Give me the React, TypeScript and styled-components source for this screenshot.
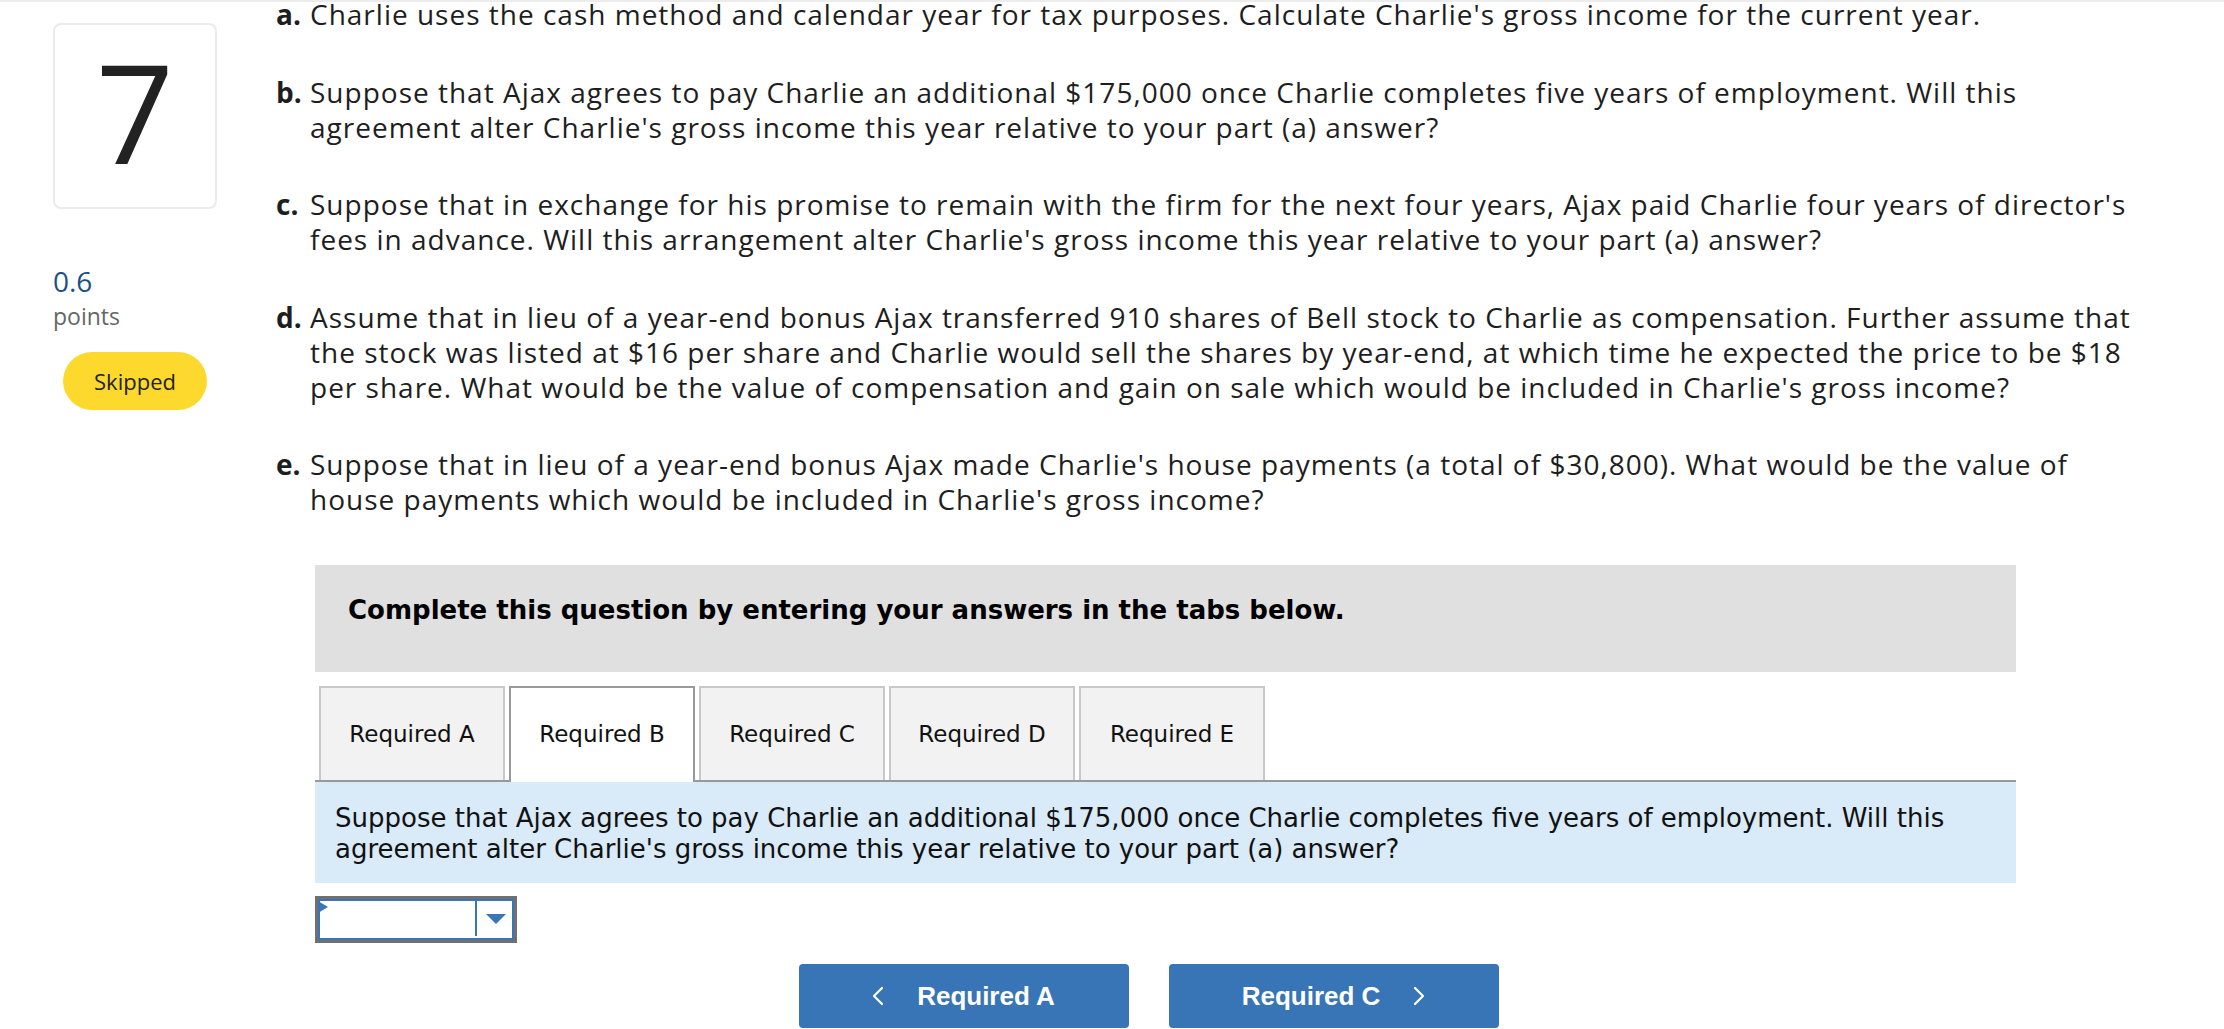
import React from 'react';
import styled, { createGlobalStyle } from 'styled-components';

const GlobalStyle = createGlobalStyle`
  html, body {
    margin: 0;
    padding: 0;
    background: #ffffff;
    overflow: hidden;
  }
  body {
    font-family: "Open Sans", "Liberation Sans", sans-serif;
    color: #1e1e1e;
  }
  * { box-sizing: border-box; }
`;

const TopShade = styled.div`
  position: fixed;
  top: 0;
  left: 0;
  right: 0;
  height: 2px;
  background: #ececec;
  z-index: 10;
`;

const Page = styled.div`
  display: flex;
  align-items: flex-start;
  width: 2224px;
`;

const Sidebar = styled.aside`
  flex: none;
  width: 164px;
  margin-left: 53px;
  padding-top: 23px;
  display: flex;
  flex-direction: column;
`;

const NumberCard = styled.div`
  height: 186px;
  border: 2px solid #ebebeb;
  border-radius: 8px;
  display: flex;
  align-items: center;
  justify-content: center;
  padding-bottom: 10px;
  font-size: 137px;
  font-weight: 500;
  line-height: 1;
  color: #222222;
`;

const Score = styled.div`
  margin-top: 56px;
  font-size: 28px;
  line-height: 33px;
  color: #1b4f8a;
`;

const ScoreUnit = styled.div`
  margin-top: 3px;
  font-size: 23px;
  line-height: 30px;
  color: #666666;
`;

const StatusPill = styled.div`
  align-self: center;
  margin-top: 21px;
  width: 144px;
  height: 58px;
  border-radius: 29px;
  background: #fdd92e;
  display: flex;
  align-items: center;
  justify-content: center;
  font-size: 22px;
  color: #222222;
`;

const Main = styled.main`
  flex: none;
  margin-left: 59px;
  margin-top: -3px;
  width: 1880px;
`;

const QuestionList = styled.div`
  display: flex;
  flex-direction: column;
  gap: 42.5px;
`;

const Part = styled.div`
  display: grid;
  grid-template-columns: 34px auto;
  font-size: 28px;
  line-height: 35px;
  color: #1e1e1e;
`;

const PartLabel = styled.span`
  font-weight: 700;
`;

const PartText = styled.span`
  letter-spacing: 1px;
`;

const AnswerSection = styled.section`
  margin-top: 48px;
  margin-left: 39px;
  width: 1701px;
  font-family: "DejaVu Sans", Verdana, sans-serif;
`;

const Instructions = styled.div`
  height: 107px;
  background: #e0e0e0;
  padding: 30px 33px 0;
  font-size: 26px;
  line-height: 31px;
  font-weight: 700;
  color: #000000;
`;

const TabBar = styled.div`
  margin-top: 14px;
  display: flex;
  align-items: flex-end;
  gap: 4px;
  padding-left: 4px;
  border-bottom: 2px solid #999999;
`;

const Tab = styled.div<{ $active?: boolean }>`
  position: relative;
  width: 186px;
  height: ${(p) => (p.$active ? '96px' : '94px')};
  margin-bottom: ${(p) => (p.$active ? '-2px' : '0')};
  border: 2px solid ${(p) => (p.$active ? '#999999' : '#c8c8c8')};
  border-bottom: none;
  background: ${(p) => (p.$active ? '#ffffff' : '#f2f2f2')};
  display: flex;
  align-items: center;
  justify-content: center;
  padding-bottom: ${(p) => (p.$active ? '2px' : '0')};
  font-size: 23px;
  color: #111111;
  z-index: ${(p) => (p.$active ? 1 : 0)};
`;

const Prompt = styled.div`
  background: #d9eaf8;
  padding: 21px 20px 18px;
  font-size: 26px;
  line-height: 31px;
  color: #111111;
`;

const Select = styled.div`
  position: relative;
  margin-top: 13px;
  width: 202px;
  height: 47px;
  border: 3px solid #707070;
  display: flex;
`;

const SelectInner = styled.div`
  flex: 1;
  display: flex;
  border: 2px solid #3a74b9;
  background: #ffffff;
`;

const SelectValue = styled.div`
  flex: 1;
`;

const SelectToggle = styled.div`
  width: 37px;
  margin-bottom: 2px;
  border-left: 2px solid #3a74b9;
  display: flex;
  align-items: center;
  justify-content: center;
  padding-left: 2px;
`;

const Flag = styled.span`
  position: absolute;
  left: 0;
  top: 2px;
  width: 0;
  height: 0;
  border-left: 10px solid #3a74b9;
  border-top: 6px solid transparent;
  border-bottom: 6px solid transparent;
`;

const NavRow = styled.div`
  margin-top: 21px;
  padding-right: 34px;
  display: flex;
  justify-content: center;
  gap: 40px;
`;

const NavButton = styled.button`
  width: 330px;
  height: 64px;
  border: none;
  border-radius: 4px;
  background: #3775b6;
  color: #ffffff;
  font-family: "Liberation Sans", Arial, sans-serif;
  font-weight: 700;
  font-size: 26px;
  display: flex;
  align-items: center;
  justify-content: center;
  gap: 33px;
  padding: 0;
  cursor: pointer;
`;

const Chevron = ({ dir }: { dir: 'left' | 'right' }) => (
  <svg width="12" height="20" viewBox="0 0 12 20" fill="none">
    <polyline
      points={dir === 'left' ? '10,2 2,10 10,18' : '2,2 10,10 2,18'}
      stroke="#ffffff"
      strokeWidth="2.2"
      strokeLinecap="round"
      strokeLinejoin="round"
    />
  </svg>
);

const DropArrow = () => (
  <svg width="20" height="10" viewBox="0 0 20 10">
    <polygon points="0,0 20,0 10,10" fill="#3a74b9" />
  </svg>
);

const parts: { label: string; lines: string[] }[] = [
  {
    label: 'a.',
    lines: [
      "Charlie uses the cash method and calendar year for tax purposes. Calculate Charlie's gross income for the current year.",
    ],
  },
  {
    label: 'b.',
    lines: [
      'Suppose that Ajax agrees to pay Charlie an additional $175,000 once Charlie completes five years of employment. Will this',
      "agreement alter Charlie's gross income this year relative to your part (a) answer?",
    ],
  },
  {
    label: 'c.',
    lines: [
      "Suppose that in exchange for his promise to remain with the firm for the next four years, Ajax paid Charlie four years of director's",
      "fees in advance. Will this arrangement alter Charlie's gross income this year relative to your part (a) answer?",
    ],
  },
  {
    label: 'd.',
    lines: [
      'Assume that in lieu of a year-end bonus Ajax transferred 910 shares of Bell stock to Charlie as compensation. Further assume that',
      'the stock was listed at $16 per share and Charlie would sell the shares by year-end, at which time he expected the price to be $18',
      "per share. What would be the value of compensation and gain on sale which would be included in Charlie's gross income?",
    ],
  },
  {
    label: 'e.',
    lines: [
      "Suppose that in lieu of a year-end bonus Ajax made Charlie's house payments (a total of $30,800). What would be the value of",
      "house payments which would be included in Charlie's gross income?",
    ],
  },
];

const tabs = ['Required A', 'Required B', 'Required C', 'Required D', 'Required E'];

export default function App() {
  return (
    <>
      <GlobalStyle />
      <TopShade />
      <Page>
        <Sidebar>
          <NumberCard>7</NumberCard>
          <Score>0.6</Score>
          <ScoreUnit>points</ScoreUnit>
          <StatusPill>Skipped</StatusPill>
        </Sidebar>
        <Main>
          <QuestionList>
            {parts.map((p) => (
              <Part key={p.label}>
                <PartLabel>{p.label}</PartLabel>
                <PartText>
                  {p.lines.map((l, i) => (
                    <React.Fragment key={i}>
                      {i > 0 && <br />}
                      {l}
                    </React.Fragment>
                  ))}
                </PartText>
              </Part>
            ))}
          </QuestionList>
          <AnswerSection>
            <Instructions>Complete this question by entering your answers in the tabs below.</Instructions>
            <TabBar>
              {tabs.map((t) => (
                <Tab key={t} $active={t === 'Required B'}>
                  {t}
                </Tab>
              ))}
            </TabBar>
            <Prompt>
              Suppose that Ajax agrees to pay Charlie an additional $175,000 once Charlie completes five years of employment. Will this
              agreement alter Charlie's gross income this year relative to your part (a) answer?
            </Prompt>
            <Select>
              <Flag />
              <SelectInner>
                <SelectValue />
                <SelectToggle>
                  <DropArrow />
                </SelectToggle>
              </SelectInner>
            </Select>
            <NavRow>
              <NavButton>
                <Chevron dir="left" />
                <span>Required A</span>
              </NavButton>
              <NavButton>
                <span>Required C</span>
                <Chevron dir="right" />
              </NavButton>
            </NavRow>
          </AnswerSection>
        </Main>
      </Page>
    </>
  );
}
